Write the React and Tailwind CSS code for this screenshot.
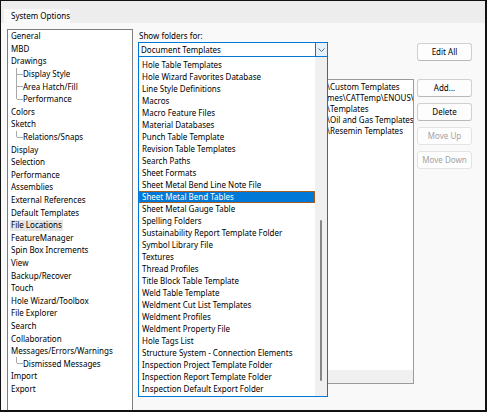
import React from "react";

const tree = [
  ["General", 0],
  ["MBD", 0],
  ["Drawings", 0],
  ["Display Style", 1],
  ["Area Hatch/Fill", 1],
  ["Performance", 2],
  ["Colors", 0],
  ["Sketch", 0],
  ["Relations/Snaps", 2],
  ["Display", 0],
  ["Selection", 0],
  ["Performance", 0],
  ["Assemblies", 0],
  ["External References", 0],
  ["Default Templates", 0],
  ["File Locations", 0, true],
  ["FeatureManager", 0],
  ["Spin Box Increments", 0],
  ["View", 0],
  ["Backup/Recover", 0],
  ["Touch", 0],
  ["Hole Wizard/Toolbox", 0],
  ["File Explorer", 0],
  ["Search", 0],
  ["Collaboration", 0],
  ["Messages/Errors/Warnings", 0],
  ["Dismissed Messages", 2],
  ["Import", 0],
  ["Export", 0],
];

const options = [
  "Hole Table Templates",
  "Hole Wizard Favorites Database",
  "Line Style Definitions",
  "Macros",
  "Macro Feature Files",
  "Material Databases",
  "Punch Table Template",
  "Revision Table Templates",
  "Search Paths",
  "Sheet Formats",
  "Sheet Metal Bend Line Note File",
  "Sheet Metal Bend Tables",
  "Sheet Metal Gauge Table",
  "Spelling Folders",
  "Sustainability Report Template Folder",
  "Symbol Library File",
  "Textures",
  "Thread Profiles",
  "Title Block Table Template",
  "Weld Table Template",
  "Weldment Cut List Templates",
  "Weldment Profiles",
  "Weldment Property File",
  "Hole Tags List",
  "Structure System - Connection Elements",
  "Inspection Project Template Folder",
  "Inspection Report Template Folder",
  "Inspection Default Export Folder",
];

const folders = [
  "\\Custom Templates",
  "mes\\CATTemp\\ENOUSVR\\Templates",
  "\\Templates",
  "\\Oil and Gas Templates",
  "\\Resemin Templates",
];

function Connector({ last }) {
  return (
    <svg width="12" height="12.6" viewBox="0 0 12 12.6" className="shrink-0" shapeRendering="crispEdges">
      <line x1="5.5" y1="0" x2="5.5" y2={last ? 6.3 : 12.6} stroke="#a8a8a8" strokeWidth="1" />
      <line x1="5.5" y1="6.5" x2="12" y2="6.5" stroke="#a8a8a8" strokeWidth="1" />
    </svg>
  );
}

function Btn({ children, disabled }) {
  return (
    <div
      className={
        "h-[18px] w-[55px] flex items-center justify-center rounded-[3px] border bg-[#fdfdfd] " +
        (disabled ? "border-[#e3e3e3] text-[#a3a3a3]" : "border-[#d0d0d0] border-b-[#b8b8b8] text-black")
      }
    >
      {children}
    </div>
  );
}

export default function App() {
  return (
    <div className="w-[487px] h-[412px] overflow-hidden flex flex-col border-t border-l border-r-2 border-b-2 border-[#111] font-['Noto_Sans',sans-serif] text-[8px] leading-none text-black bg-[#f9f9f9]">
      {/* header */}
      <div className="h-[22px] shrink-0 bg-[#ededed] flex items-end pl-[3px]">
        <div className="h-[14px] w-[66px] bg-[#f9f9f9] flex items-center pl-[7px]">System Options</div>
      </div>
      {/* content */}
      <div className="flex-1 min-h-0 flex pl-[6px] pt-[6px]">
        {/* tree */}
        <div className="w-[126px] shrink-0 bg-white border-t border-l border-r border-[#7d7d7d] overflow-hidden">
          {tree.map(([label, lvl, sel], i) => (
            <div key={i} className="h-[12.6px] flex items-center pl-[3px]">
              {lvl > 0 && <Connector last={lvl === 2} />}
              <span className={sel ? "bg-[#e6e6e6] px-[1px] -ml-[1px] h-[11px] flex items-center" : ""}>{label}</span>
            </div>
          ))}
        </div>
        {/* right */}
        <div className="ml-[5px] flex flex-col">
          <div className="h-[13px] flex items-center pl-[1px]">Show folders for:</div>
          <div className="flex">
            <div className="w-[276px] flex flex-col relative">
              {/* dropdown */}
              <div className="w-[190px] h-[15px] border border-[#0078d7] bg-white flex">
                <div className="flex-1 flex items-center pl-[2px]">Document Templates</div>
                <div className="w-[12px] bg-[#e5f1fb] border-l border-[#0078d7] flex items-center justify-center">
                  <svg width="7" height="4" viewBox="0 0 7 4">
                    <polyline points="0.5,0.5 3.5,3.5 6.5,0.5" fill="none" stroke="#5a5a5a" strokeWidth="0.9" />
                  </svg>
                </div>
              </div>
              {/* folder list */}
              <div className="mt-[22px] h-[305px] border border-[#9a9a9a] bg-white flex flex-col">
                <div className="flex-1 pt-[1px] overflow-hidden">
                  {folders.map((f, i) => (
                    <div key={i} className="h-[11px] flex items-center pl-[188px] whitespace-nowrap">
                      {f}
                    </div>
                  ))}
                </div>
                <div className="h-[13px] bg-[#f0f0f0]" />
              </div>
              {/* popup */}
              <div className="absolute left-0 top-[15px] w-[190px] h-[340px] bg-white border-l border-r border-b border-[#0078d7] flex">
                <div className="flex-1 pt-[2px]">
                  {options.map((o, i) =>
                    o === "Sheet Metal Bend Tables" ? (
                      <div key={i} className="h-[12px] flex items-center pl-[2px] bg-[#0078d7] border border-[#a65d1f] text-white">
                        {o}
                      </div>
                    ) : (
                      <div key={i} className="h-[12px] flex items-center pl-[3px]">
                        {o}
                      </div>
                    )
                  )}
                </div>
                <div className="w-[12px] bg-[#f0f0f0] flex justify-center">
                  <div className="mt-[163px] w-[2px] h-[161px] bg-[#868686] rounded-full" />
                </div>
              </div>
            </div>
            {/* buttons */}
            <div className="ml-[3px] flex flex-col">
              <div className="mt-[1px]">
                <Btn>Edit All</Btn>
              </div>
              <div className="mt-[18px] flex flex-col gap-[6px]">
                <Btn>Add...</Btn>
                <Btn>Delete</Btn>
                <Btn disabled>Move Up</Btn>
                <Btn disabled>Move Down</Btn>
              </div>
            </div>
          </div>
        </div>
      </div>
    </div>
  );
}
